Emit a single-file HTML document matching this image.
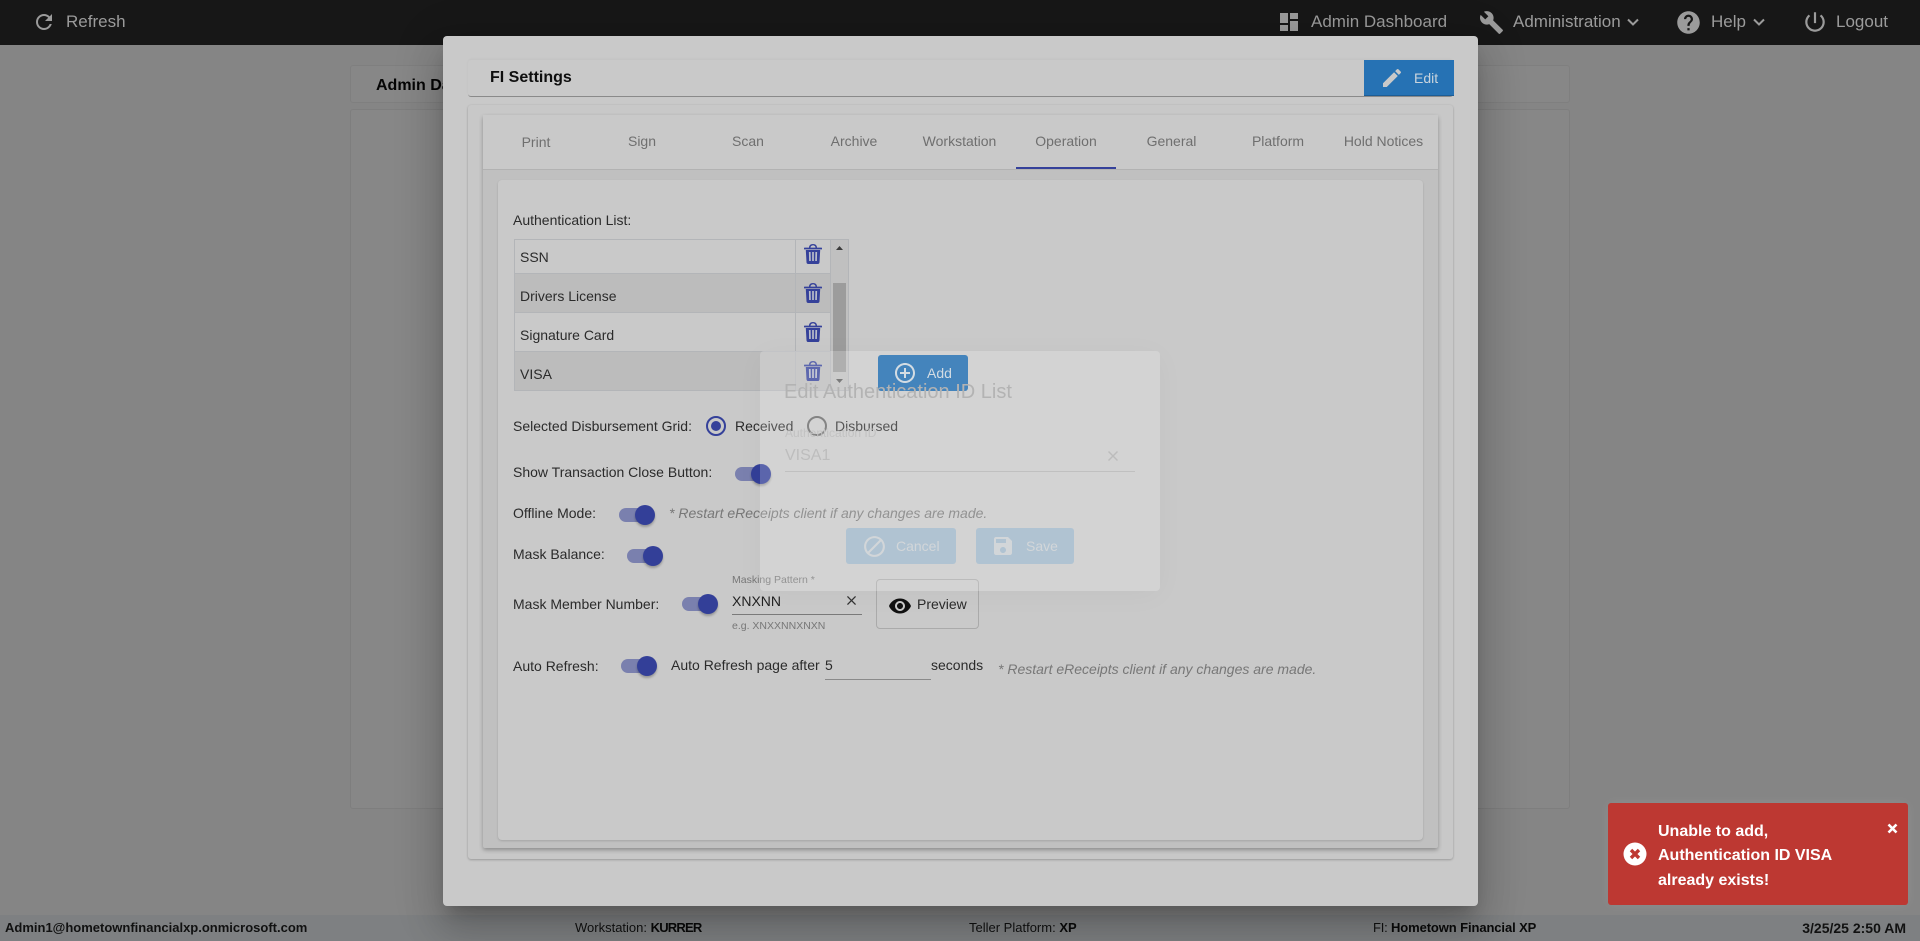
<!DOCTYPE html>
<html><head><meta charset="utf-8"><title>FI Settings</title>
<style>
html,body{margin:0;padding:0}
body{width:1920px;height:941px;overflow:hidden;position:relative;background:#858585;font-family:"Liberation Sans",Arial,sans-serif;font-size:14px;color:#2b2b2b}
.a,.t,svg{position:absolute}
.t{line-height:20px;white-space:nowrap}
.nav{color:#9b9b9b;font-size:17px;line-height:24px}
.tab{color:#6f6f6f;width:106px;text-align:center;font-size:14px}
.foot{font-size:13px;color:#111;top:918px}
.foot b{color:#0a0a0a}
.track{position:absolute;width:34px;height:14px;border-radius:7px;background:#7a80ae}
.knob{position:absolute;width:20px;height:20px;border-radius:50%;background:#333f98;box-shadow:0 2px 2px rgba(0,0,0,.25)}
</style></head><body>
<!-- top bar -->
<div class="a" style="left:0;top:0;width:1920px;height:45px;background:#171717"></div>
<svg style="left:32px;top:10px" width="24" height="24" viewBox="0 0 24 24" fill="#9b9b9b"><path d="M17.65 6.35C16.2 4.9 14.21 4 12 4c-4.42 0-7.99 3.58-7.99 8s3.57 8 7.99 8c3.73 0 6.84-2.55 7.73-6h-2.08c-.82 2.33-3.04 4-5.65 4-3.31 0-6-2.69-6-6s2.69-6 6-6c1.66 0 3.14.69 4.22 1.78L13 11h7V4l-2.35 2.35z"/></svg>
<div class="t nav" style="left:66px;top:10px">Refresh</div>
<svg style="left:1277px;top:10px" width="24" height="24" viewBox="0 0 24 24" fill="#9b9b9b"><path d="M3 13h8V3H3v10zm0 8h8v-6H3v6zm10 0h8V11h-8v10zm0-18v6h8V3h-8z"/></svg>
<div class="t nav" style="left:1311px;top:10px">Admin Dashboard</div>
<svg style="left:1479px;top:10px" width="25" height="25" viewBox="0 0 24 24" fill="#9b9b9b"><path d="M22.7 19l-9.1-9.1c.9-2.3.4-5-1.5-6.9-2-2-5-2.4-7.4-1.3L9 6 6 9 1.6 4.7C.4 7.1.9 10.1 2.9 12.1c1.9 1.9 4.6 2.4 6.9 1.5l9.1 9.1c.4.4 1 .4 1.4 0l2.3-2.3c.5-.4.5-1.1.1-1.4z"/></svg>
<div class="t nav" style="left:1513px;top:10px">Administration</div>
<svg style="left:1625px;top:14px" width="16" height="16" viewBox="0 0 16 16" fill="none" stroke="#9b9b9b" stroke-width="2"><path d="M3 5.5l5 5 5-5"/></svg>
<svg style="left:1675px;top:9px" width="27" height="27" viewBox="0 0 24 24" fill="#9b9b9b"><path d="M12 2C6.48 2 2 6.48 2 12s4.48 10 10 10 10-4.48 10-10S17.52 2 12 2zm1 17h-2v-2h2v2zm2.07-7.75l-.9.92C13.45 12.9 13 13.5 13 15h-2v-.5c0-1.1.45-2.1 1.17-2.83l1.24-1.26c.37-.36.59-.86.59-1.41 0-1.1-.9-2-2-2s-2 .9-2 2H8c0-2.21 1.79-4 4-4s4 1.79 4 4c0 .88-.36 1.68-.93 2.25z"/></svg>
<div class="t nav" style="left:1711px;top:10px">Help</div>
<svg style="left:1751px;top:14px" width="16" height="16" viewBox="0 0 16 16" fill="none" stroke="#9b9b9b" stroke-width="2"><path d="M3 5.5l5 5 5-5"/></svg>
<svg style="left:1802px;top:9px" width="26" height="26" viewBox="0 0 24 24" fill="#9b9b9b"><path d="M13 3h-2v10h2V3zm4.83 2.17l-1.42 1.42C17.99 7.86 19 9.81 19 12c0 3.87-3.13 7-7 7s-7-3.13-7-7c0-2.19 1.01-4.14 2.58-5.42L6.17 5.17C4.23 6.82 3 9.26 3 12c0 4.97 4.03 9 9 9s9-4.03 9-9c0-2.74-1.23-5.18-3.17-6.83z"/></svg>
<div class="t nav" style="left:1836px;top:10px">Logout</div>

<!-- background cards -->
<div class="a" style="left:350px;top:65px;width:1220px;height:38px;box-sizing:border-box;background:#878787;border:1px solid #7f7f7f;border-radius:3px"></div>
<div class="t" style="left:376px;top:76px;font-weight:bold;font-size:16px;color:#050505">Admin Dashboard</div>
<div class="a" style="left:350px;top:109px;width:1220px;height:700px;box-sizing:border-box;background:#878787;border:1px solid #7e7e7e;border-radius:3px"></div>

<!-- footer -->
<div class="a" style="left:0;top:915px;width:1920px;height:26px;background:#7e8082"></div>
<div class="t foot" style="left:5px;font-weight:bold">Admin1@hometownfinancialxp.onmicrosoft.com</div>
<div class="t foot" style="left:575px">Workstation: <b style="letter-spacing:-.8px">KURRER</b></div>
<div class="t foot" style="left:969px">Teller Platform: <b>XP</b></div>
<div class="t foot" style="left:1373px;letter-spacing:-.2px">FI: <b style="letter-spacing:-.1px">Hometown Financial XP</b></div>
<div class="t foot" style="right:14px;font-weight:bold;font-size:14px">3/25/25 2:50 AM</div>

<!-- modal -->
<div class="a" style="left:443px;top:36px;width:1035px;height:870px;background:#c9c9c9;border-radius:4px;box-shadow:0 11px 15px -7px rgba(0,0,0,.2),0 24px 38px 3px rgba(0,0,0,.14),0 9px 46px 8px rgba(0,0,0,.12)"></div>
<div class="a" style="left:468px;top:60px;width:985px;height:37px;background:#c9c9c9;box-sizing:border-box;border-bottom:1px solid #8a8a8a;border-radius:3px;box-shadow:0 -1px 2px rgba(0,0,0,.04)"></div>
<div class="t" style="left:490px;top:68px;font-weight:bold;font-size:16px;color:#0f0f0f">FI Settings</div>
<div class="a" style="left:1364px;top:60px;width:90px;height:36px;background:#2672b4;border-bottom:1px solid #1d5d95;box-sizing:border-box"></div>
<svg style="left:1380px;top:66px" width="24" height="24" viewBox="0 0 24 24" fill="#c9c9c9"><path d="M3 17.25V21h3.75L17.81 9.94l-3.75-3.75L3 17.25zM20.71 7.04c.39-.39.39-1.02 0-1.41l-2.34-2.34c-.39-.39-1.02-.39-1.41 0l-1.83 1.83 3.75 3.75 1.83-1.83z"/></svg>
<div class="t" style="left:1414px;top:68px;color:#c9d4dd">Edit</div>

<div class="a" style="left:468px;top:105px;width:985px;height:754px;background:#c8c8c8;border-radius:3px;box-shadow:0 1px 2px rgba(0,0,0,.22),0 0 2px rgba(0,0,0,.05)"></div>
<div class="a" style="left:483px;top:115px;width:955px;height:733px;background:#c0c0c0;box-shadow:0 2px 4px rgba(0,0,0,.3);border-radius:2px"></div>
<div class="a" style="left:483px;top:115px;width:955px;height:54px;background:#c9c9c9;border-bottom:1px solid #b2b2b2"></div>
<div class="t tab" style="left:483px;top:132px">Print</div>
<div class="t tab" style="left:589px;top:131px">Sign</div>
<div class="t tab" style="left:695px;top:131px">Scan</div>
<div class="t tab" style="left:801px;top:131px">Archive</div>
<div class="t tab" style="left:906.5px;top:131px">Workstation</div>
<div class="t tab" style="left:1013px;top:131px">Operation</div>
<div class="t tab" style="left:1118.500px;top:131px">General</div>
<div class="t tab" style="left:1225px;top:131px">Platform</div>
<div class="t tab" style="left:1330.500px;top:131px">Hold Notices</div>
<div class="a" style="left:1016px;top:167px;width:100px;height:2px;background:#35419a"></div>

<div class="a" style="left:498px;top:180px;width:925px;height:660px;background:#c9c9c9;border-radius:4px;box-shadow:0 1px 2px rgba(0,0,0,.15)"></div>

<div class="t" style="left:513px;top:210px">Authentication List:</div>
<!-- table -->
<div class="a" style="left:514px;top:239px;width:335px;height:152px;box-sizing:border-box;border:1px solid #b3b5b8;background:#c9c9c9"></div>
<div class="a" style="left:515px;top:273px;width:315px;height:39px;background:#bcbcbc"></div>
<div class="a" style="left:515px;top:351px;width:315px;height:39px;background:#bcbcbc"></div>
<div class="a" style="left:515px;top:273px;width:315px;height:1px;background:#b3b5b8"></div>
<div class="a" style="left:515px;top:312px;width:315px;height:1px;background:#b3b5b8"></div>
<div class="a" style="left:515px;top:351px;width:315px;height:1px;background:#b3b5b8"></div>
<div class="a" style="left:795px;top:240px;width:1px;height:150px;background:#b3b5b8"></div>
<div class="a" style="left:830px;top:240px;width:1px;height:150px;background:#b3b5b8"></div>
<div class="a" style="left:831px;top:240px;width:17px;height:150px;background:#c0c0c0"></div>
<div class="a" style="left:833px;top:283px;width:13px;height:89px;background:#9c9c9c"></div>
<svg style="left:833px;top:243px" width="13" height="10" viewBox="0 0 13 10" fill="#3c3c3c"><path d="M3 7h7L6.5 3z"/></svg>
<svg style="left:833px;top:376px" width="13" height="10" viewBox="0 0 13 10" fill="#5a5a5a"><path d="M3 3h7L6.5 7z"/></svg>
<div class="t" style="left:520px;top:247px">SSN</div>
<div class="t" style="left:520px;top:286px">Drivers License</div>
<div class="t" style="left:520px;top:325px">Signature Card</div>
<div class="t" style="left:520px;top:364px">VISA</div>
<svg style="left:804px;top:244px" width="18" height="20" viewBox="0 0 18 20"><path fill="#35419a" d="M5 3.6C5 1.4 6.6 0 9 0s4 1.4 4 3.6h4.4a.6.6 0 0 1 .6.6v1.2H0V4.200a.6.6 0 0 1 .6-.6H5zm1.500 0h5C11.500 2.200 10.400 1.400 9 1.400S6.500 2.200 6.500 3.600zM1.800 6h14.400l-.7 12.200A1.900 1.900 0 0 1 13.600 20H4.400a1.900 1.900 0 0 1-1.900-1.800z"/><path fill="#b9bdc9" d="M4.900 8h1.700l.2 9H5.100zM8.150 8h1.700v9h-1.700zM11.400 8h1.700l-.2 9h-1.700z"/></svg>
<svg style="left:804px;top:283px" width="18" height="20" viewBox="0 0 18 20"><path fill="#35419a" d="M5 3.6C5 1.4 6.6 0 9 0s4 1.4 4 3.6h4.4a.6.6 0 0 1 .6.6v1.2H0V4.200a.6.6 0 0 1 .6-.6H5zm1.500 0h5C11.500 2.200 10.400 1.400 9 1.400S6.500 2.200 6.500 3.600zM1.800 6h14.400l-.7 12.200A1.900 1.900 0 0 1 13.600 20H4.400a1.900 1.900 0 0 1-1.900-1.800z"/><path fill="#b9bdc9" d="M4.900 8h1.700l.2 9H5.100zM8.150 8h1.700v9h-1.700zM11.400 8h1.700l-.2 9h-1.700z"/></svg>
<svg style="left:804px;top:322px" width="18" height="20" viewBox="0 0 18 20"><path fill="#35419a" d="M5 3.6C5 1.4 6.6 0 9 0s4 1.4 4 3.6h4.4a.6.6 0 0 1 .6.6v1.2H0V4.200a.6.6 0 0 1 .6-.6H5zm1.500 0h5C11.500 2.200 10.400 1.400 9 1.400S6.500 2.200 6.500 3.600zM1.800 6h14.400l-.7 12.200A1.900 1.900 0 0 1 13.600 20H4.400a1.900 1.900 0 0 1-1.900-1.800z"/><path fill="#b9bdc9" d="M4.900 8h1.700l.2 9H5.100zM8.150 8h1.700v9h-1.700zM11.400 8h1.700l-.2 9h-1.700z"/></svg>
<svg style="left:804px;top:361px" width="18" height="20" viewBox="0 0 18 20"><path fill="#35419a" d="M5 3.6C5 1.4 6.6 0 9 0s4 1.4 4 3.6h4.4a.6.6 0 0 1 .6.6v1.2H0V4.200a.6.6 0 0 1 .6-.6H5zm1.500 0h5C11.500 2.200 10.400 1.400 9 1.400S6.500 2.200 6.500 3.600zM1.800 6h14.400l-.7 12.200A1.900 1.900 0 0 1 13.600 20H4.400a1.900 1.900 0 0 1-1.900-1.800z"/><path fill="#b9bdc9" d="M4.900 8h1.700l.2 9H5.100zM8.150 8h1.700v9h-1.700zM11.400 8h1.700l-.2 9h-1.700z"/></svg>

<!-- add button -->
<div class="a" style="left:878px;top:355px;width:90px;height:36px;background:#1666ac;border-radius:3px"></div>
<svg style="left:893px;top:361px" width="24" height="24" viewBox="0 0 24 24" fill="#c9d4dd"><path d="M13 7h-2v4H7v2h4v4h2v-4h4v-2h-4V7zm-1-5C6.48 2 2 6.48 2 12s4.48 10 10 10 10-4.48 10-10S17.52 2 12 2zm0 18c-4.41 0-8-3.59-8-8s3.59-8 8-8 8 3.59 8 8-3.59 8-8 8z"/></svg>
<div class="t" style="left:927px;top:363px;color:#c9d4dd">Add</div>

<!-- form rows -->
<div class="t" style="left:513px;top:416px">Selected Disbursement Grid:</div>
<div class="a" style="left:706px;top:416px;width:20px;height:20px;box-sizing:border-box;border:2px solid #35419a;border-radius:50%"></div>
<div class="a" style="left:711px;top:421px;width:10px;height:10px;background:#35419a;border-radius:50%"></div>
<div class="t" style="left:735px;top:416px">Received</div>
<div class="a" style="left:807px;top:416px;width:20px;height:20px;box-sizing:border-box;border:2px solid #666;border-radius:50%"></div>
<div class="t" style="left:835px;top:416px">Disbursed</div>

<div class="t" style="left:513px;top:462px">Show Transaction Close Button:</div>
<div class="track" style="left:735px;top:467px"></div><div class="knob" style="left:751px;top:464px"></div>

<div class="t" style="left:513px;top:503px">Offline Mode:</div>
<div class="track" style="left:619px;top:508px"></div><div class="knob" style="left:635px;top:505px"></div>
<div class="t" style="left:669px;top:503px;font-style:italic;color:#777">* Restart eReceipts client if any changes are made.</div>

<div class="t" style="left:513px;top:544px">Mask Balance:</div>
<div class="track" style="left:627px;top:549px"></div><div class="knob" style="left:643px;top:546px"></div>

<div class="t" style="left:513px;top:594px">Mask Member Number:</div>
<div class="track" style="left:682px;top:597px"></div><div class="knob" style="left:698px;top:594px"></div>
<div class="t" style="left:732px;top:570px;font-size:10.5px;color:#777">Masking Pattern *</div>
<div class="t" style="left:732px;top:591px;color:#222">XNXNN</div>
<svg style="left:847px;top:596px" width="9" height="9" viewBox="5 5 14 14" fill="#333"><path d="M19 6.41L17.59 5 12 10.59 6.41 5 5 6.41 10.59 12 5 17.59 6.41 19 12 13.41 17.59 19 19 17.59 13.41 12z"/></svg>
<div class="a" style="left:732px;top:614px;width:130px;height:1px;background:#7a7a7a"></div>
<div class="t" style="left:732px;top:616px;font-size:10.5px;color:#777">e.g. XNXXNNXNXN</div>
<div class="a" style="left:876px;top:579px;width:103px;height:50px;box-sizing:border-box;border:1px solid #aaa;border-radius:4px"></div>
<svg style="left:888px;top:594px" width="24" height="24" viewBox="0 0 24 24" fill="#111"><path d="M12 4.5C7 4.500 2.730 7.610 1 12c1.730 4.390 6 7.500 11 7.500s9.270-3.110 11-7.500c-1.730-4.390-6-7.500-11-7.500zM12 17c-2.760 0-5-2.240-5-5s2.240-5 5-5 5 2.240 5 5-2.240 5-5 5zm0-8c-1.660 0-3 1.340-3 3s1.340 3 3 3 3-1.340 3-3-1.340-3-3-3z"/></svg>
<div class="t" style="left:917px;top:594px">Preview</div>

<div class="t" style="left:513px;top:656px">Auto Refresh:</div>
<div class="track" style="left:621px;top:659px"></div><div class="knob" style="left:637px;top:656px"></div>
<div class="t" style="left:671px;top:655px">Auto Refresh page after</div>
<div class="t" style="left:825px;top:655px">5</div>
<div class="a" style="left:825px;top:679px;width:106px;height:1px;background:#8a8a8a"></div>
<div class="t" style="left:931px;top:655px">seconds</div>
<div class="t" style="left:998px;top:659px;font-style:italic;color:#777">* Restart eReceipts client if any changes are made.</div>

<!-- ghost dialog -->
<div class="a" style="left:760px;top:351px;width:400px;height:240px;background:rgba(255,255,255,.2);border-radius:4px;box-shadow:0 4px 30px rgba(0,0,0,.03)"></div>
<div class="t" style="left:784px;top:380px;font-size:20px;line-height:24px;color:#b3b3b3">Edit Authentication ID List</div>
<div class="t" style="left:785px;top:423px;font-size:12px;color:#c2c2c2">Authentication ID</div>
<div class="t" style="left:785px;top:446px;font-size:16px;color:#bdbdbd">VISA1</div>
<svg style="left:1108px;top:451px" width="10" height="10" viewBox="5 5 14 14" fill="#bcbcbc"><path d="M19 6.41L17.59 5 12 10.59 6.41 5 5 6.41 10.59 12 5 17.59 6.41 19 12 13.41 17.59 19 19 17.59 13.41 12z"/></svg>
<div class="a" style="left:785px;top:471px;width:350px;height:1px;background:#c0c0c0"></div>
<div class="a" style="left:846px;top:528px;width:110px;height:36px;background:#b0c3d2;border-radius:3px"></div>
<svg style="left:862px;top:534px" width="25" height="25" viewBox="0 0 24 24" fill="#d2d6d9"><path d="M12 2C6.48 2 2 6.48 2 12s4.48 10 10 10 10-4.48 10-10S17.52 2 12 2zM4 12c0-4.42 3.58-8 8-8 1.85 0 3.55.63 4.9 1.69L5.69 16.9C4.63 15.55 4 13.85 4 12zm8 8c-1.85 0-3.55-.63-4.9-1.69L18.31 7.1C19.37 8.45 20 10.15 20 12c0 4.42-3.58 8-8 8z"/></svg>
<div class="t" style="left:896px;top:536px;color:#d2d6d9">Cancel</div>
<div class="a" style="left:976px;top:528px;width:98px;height:36px;background:#b0c3d2;border-radius:3px"></div>
<svg style="left:991px;top:534px" width="24" height="24" viewBox="0 0 24 24" fill="#d2d6d9"><path d="M17 3H5c-1.11 0-2 .9-2 2v14c0 1.1.89 2 2 2h14c1.1 0 2-.9 2-2V7l-4-4zm-5 16c-1.66 0-3-1.34-3-3s1.34-3 3-3 3 1.34 3 3-1.34 3-3 3zm3-10H5V5h10v4z"/></svg>
<div class="t" style="left:1026px;top:536px;color:#d2d6d9">Save</div>

<!-- toast -->
<div class="a" style="left:1608px;top:803px;width:300px;height:102px;background:#bd3832;border-radius:3px;box-shadow:0 0 12px rgba(255,255,255,.08)"></div>
<svg style="left:1623px;top:842px" width="24" height="24" viewBox="0 0 24 24"><circle cx="12" cy="12" r="11.5" fill="#fff"/><path d="M8 8l8 8M16 8l-8 8" stroke="#bd3832" stroke-width="3.4" fill="none"/></svg>
<div class="t" style="left:1658px;top:820px;font-weight:bold;font-size:16px;line-height:24.4px;color:#fff">Unable to add,<br>Authentication ID VISA<br>already exists!</div>
<svg style="left:1887px;top:823px" width="11" height="11" viewBox="0 0 11 11"><path d="M1.5 1.5l8 8M9.500 1.5l-8 8" stroke="#fff" stroke-width="2.600" fill="none"/></svg>
</body></html>
